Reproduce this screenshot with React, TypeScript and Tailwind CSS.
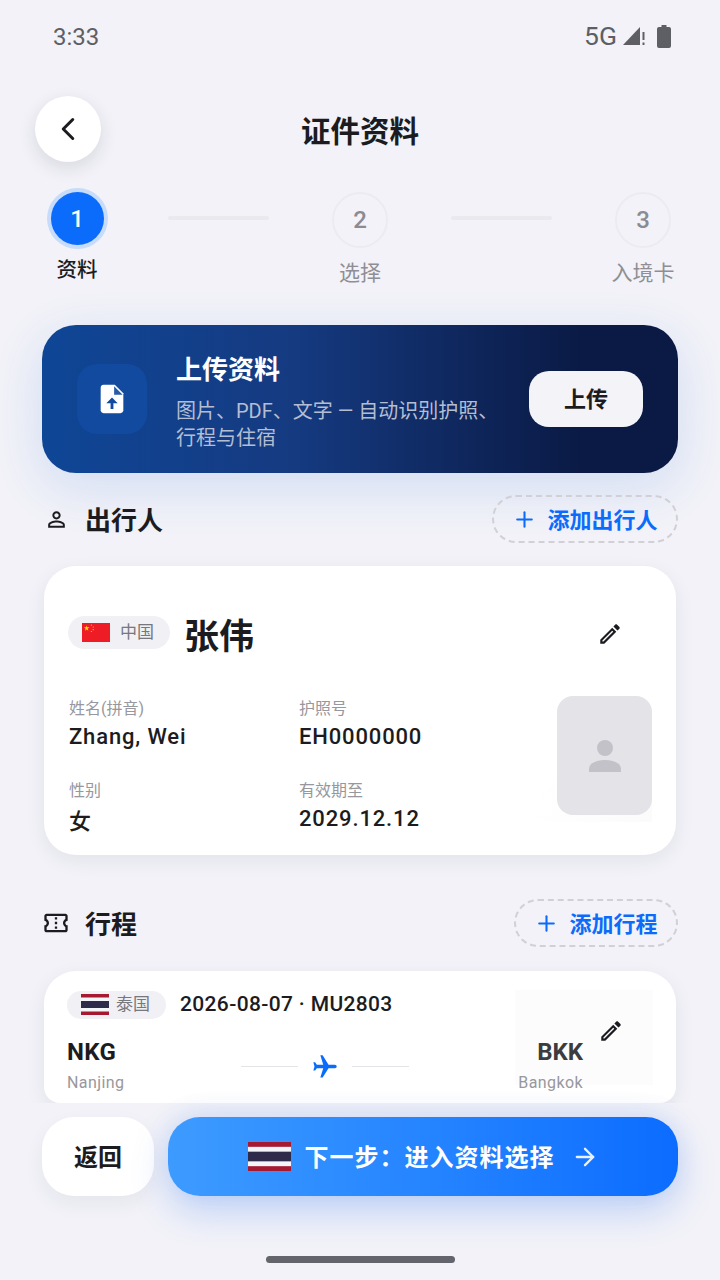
import { ArrowRight, ChevronLeft, Plus } from 'lucide-react';

const EDIT_PATH =
  'M14.06 9.02l.92.92L5.92 19H5v-.92l9.06-9.06M17.66 3c-.25 0-.51.1-.7.29l-1.83 1.83 3.75 3.75 1.83-1.83c.39-.39.39-1.02 0-1.41l-2.34-2.34c-.2-.2-.45-.29-.71-.29zm-3.6 3.19L3 17.25V21h3.75L17.81 9.94l-3.75-3.75z';
const PERSON_PATH =
  'M12 5.9c1.16 0 2.1.94 2.1 2.1s-.94 2.1-2.1 2.1S9.9 9.16 9.9 8s.94-2.1 2.1-2.1m0 9c2.97 0 6.1 1.46 6.1 2.1v1.1H5.9V17c0-.64 3.13-2.1 6.1-2.1M12 4C9.79 4 8 5.79 8 8s1.79 4 4 4 4-1.79 4-4-1.79-4-4-4zm0 9c-2.67 0-8 1.34-8 4v3h16v-3c0-2.66-5.33-4-8-4z';
const TICKET_PATH =
  'M22 10V6c0-1.11-.9-2-2-2H4c-1.1 0-1.99.89-1.99 2v4c1.1 0 1.99.9 1.99 2s-.89 2-2 2v4c0 1.1.9 2 2 2h16c1.1 0 2-.9 2-2v-4c-1.1 0-2-.9-2-2s.9-2 2-2zm-2-1.46c-1.19.69-2 1.99-2 3.46s.81 2.77 2 3.46V18H4v-2.54c1.19-.69 2-1.99 2-3.46 0-1.48-.8-2.77-1.99-3.46L4 6h16v2.54zM11 15h2v2h-2zm0-4h2v2h-2zm0-4h2v2h-2z';

function MaterialIcon({ d, className }: { d: string; className?: string }) {
  return (
    <svg viewBox="0 0 24 24" fill="currentColor" className={className}>
      <path d={d} />
    </svg>
  );
}

function ThaiFlag({ className }: { className?: string }) {
  return (
    <svg viewBox="0 0 30 20" preserveAspectRatio="none" className={className}>
      <rect width="30" height="20" fill="#a51931" />
      <rect y="3.33" width="30" height="13.34" fill="#f4f5f8" />
      <rect y="6.67" width="30" height="6.66" fill="#2d2a4a" />
    </svg>
  );
}

function ChinaFlag() {
  return (
    <svg viewBox="0 0 30 20" preserveAspectRatio="none" className="w-[28px] h-[19px] flex-shrink-0">
      <rect width="30" height="20" fill="#ee1c25" />
      <polygon points="5,2.5 5.7,4.600 8,4.600 6.100,6 6.900,8.200 5,6.800 3.100,8.200 3.900,6 2,4.600 4.300,4.600" fill="#ffde00" />
      <circle cx="10" cy="2.2" r="0.6" fill="#ffde00" />
      <circle cx="12" cy="4.2" r="0.6" fill="#ffde00" />
      <circle cx="12" cy="7" r="0.6" fill="#ffde00" />
      <circle cx="10" cy="9" r="0.6" fill="#ffde00" />
    </svg>
  );
}

function Step({ n, label, active }: { n: number; label: string; active?: boolean }) {
  return (
    <div className="w-[100px] flex flex-col items-center flex-shrink-0">
      {active ? (
        <>
          <div className="w-[53px] h-[53px] mt-[4px] rounded-full bg-[#0b6cfb] ring-4 ring-[#c6dcfa] flex items-center justify-center text-white text-[24px] font-medium leading-none">
            {n}
          </div>
          <div className="mt-[13px] text-[20.5px] leading-[24px] font-medium text-[#1c1c20]">{label}</div>
        </>
      ) : (
        <>
          <div className="w-[56px] h-[56px] mt-[4px] rounded-full border-2 border-[#ebebf0] flex items-center justify-center text-[#8b8b90] text-[24px] font-medium leading-none">
            {n}
          </div>
          <div className="mt-[13px] text-[21px] leading-[24px] text-[#8e8e94]">{label}</div>
        </>
      )}
    </div>
  );
}

function SectionHeader({ iconPath, iconSize, title, action, buttonWidth }: { iconPath: string; iconSize: string; title: string; action: string; buttonWidth: string }) {
  return (
    <div className="flex items-center justify-between pl-[44px] pr-[42px] h-[48px]">
      <div className="flex items-center">
        <div className="w-[24px] flex justify-center">
          <MaterialIcon d={iconPath} className={`${iconSize} text-[#1c1c20] flex-none`} />
        </div>
        <span className="ml-[17px] pt-[4px] text-[26px] leading-none font-bold text-[#1c1c20]">{title}</span>
      </div>
      <div className={`${buttonWidth} h-[48px] rounded-full border-2 border-dashed border-[#d0d0d6] flex items-center justify-center gap-[10px] text-[#0b6cfb] text-[22px] font-semibold`}>
        <Plus className="w-[25px] h-[25px]" strokeWidth={2} />
        <span className="pt-[2px]">{action}</span>
      </div>
    </div>
  );
}

function Field({ label, value, tall }: { label: string; value: string; tall?: boolean }) {
  return (
    <div>
      <div className="text-[16px] leading-[20px] text-[#97979d]">{label}</div>
      <div className={`mt-[5px] text-[22px] leading-[26px] tracking-[0.85px] font-medium text-[#1c1c20] ${tall ? 'pt-[3px]' : ''}`}>{value}</div>
    </div>
  );
}

export default function App() {
  return (
    <div className="w-[720px] h-[1280px] overflow-hidden flex flex-col bg-[#f2f2f8] font-['Roboto','Noto_Sans_CJK_SC',sans-serif]">
      <main className="h-[1103px] flex-shrink-0 overflow-hidden">
        {/* Status bar */}
        <div className="h-[72px] pl-[53px] pr-[49px] flex items-center justify-between text-[#5e5f65]">
          <span className="text-[24px] leading-none pt-[1px]">3:33</span>
          <div className="flex items-center">
            <span className="text-[26.5px] leading-none">5G</span>
            <svg viewBox="0 0 23 22" className="w-[23px] h-[22px] ml-[6px] fill-current">
              <path d="M17 2v18H0z" />
              <path d="M19.500 7h2v8h-2zM19.500 17.500h2V20h-2z" />
            </svg>
            <svg viewBox="0 0 14 24" className="w-[14px] h-[24px] ml-[11px] fill-current">
              <path d="M4.500 1h5v2H12a2 2 0 0 1 2 2v17a2 2 0 0 1-2 2H2a2 2 0 0 1-2-2V5a2 2 0 0 1 2-2h2.500z" />
            </svg>
          </div>
        </div>

        {/* Header */}
        <div className="mt-[24px] px-[35px] flex items-center">
          <div className="w-[66px] h-[66px] rounded-full bg-white shadow-[0_6px_18px_rgba(30,30,50,0.12)] flex items-center justify-center flex-shrink-0">
            <ChevronLeft className="w-[38px] h-[38px] text-[#1c1c20]" strokeWidth={1.9} />
          </div>
          <h1 className="flex-1 text-center text-[29.5px] leading-[36px] mt-[5px] font-bold text-[#1c1c20]">证件资料</h1>
          <div className="w-[66px] flex-shrink-0" />
        </div>

        {/* Stepper */}
        <div className="mt-[26px] px-[27px] flex items-start">
          <Step n={1} label="资料" active />
          <div className="mx-[41px] mt-[28px] h-[4px] w-[101px] flex-shrink-0 rounded-full bg-[#e9e9ee]" />
          <Step n={2} label="选择" />
          <div className="mx-[41px] mt-[28px] h-[4px] w-[101px] flex-shrink-0 rounded-full bg-[#e9e9ee]" />
          <Step n={3} label="入境卡" />
        </div>

        {/* Upload banner */}
        <div className="mt-[40px] mx-[42px] h-[148px] rounded-[34px] bg-gradient-to-r from-[#0e4696] via-[#153a80] via-40% to-[#0a1a45] to-85% shadow-[0_14px_50px_rgba(40,110,220,0.16)] pl-[35px] pr-[35px] flex items-center">
          <div className="w-[70px] h-[70px] rounded-[20px] bg-[#114a9e] flex items-center justify-center flex-shrink-0">
            <svg viewBox="0 0 24 24" className="w-[34px] h-[34px]">
              <path d="M14 2H6c-1.100 0-2 .9-2 2v16c0 1.100.9 2 2 2h12c1.100 0 2-.9 2-2V8z" fill="#fff" />
              <path d="M13.500 3V9h6z" fill="#114a9e" opacity="0.9" />
              <path d="M12 11l-4 4h3v4h2v-4h3z" fill="#114a9e" />
            </svg>
          </div>
          <div className="ml-[29px] pt-[8px] flex-1 min-w-0">
            <div className="text-[26px] leading-[32px] font-semibold text-white">上传资料</div>
            <div className="mt-[12px] w-[325px] text-[20px] leading-[27px] text-[#b3bed2]">图片、PDF、文字 — 自动识别护照、行程与住宿</div>
          </div>
          <div className="w-[114px] h-[56px] rounded-[20px] bg-[#f4f3f7] flex items-center justify-center text-[22px] font-bold text-[#1c1c20] flex-shrink-0">
            上传
          </div>
        </div>

        <div className="mt-[22px]">
          <SectionHeader iconPath={PERSON_PATH} iconSize="w-[25px] h-[25px]" title="出行人" action="添加出行人" buttonWidth="w-[186px]" />
        </div>

        {/* Traveller card */}
        <div className="relative mt-[23px] mx-[44px] h-[289px] rounded-[32px] bg-white shadow-[0_6px_20px_rgba(30,30,60,0.07)] pl-[25px] pr-[24px] pt-[50px]">
          <div className="flex items-center">
            <div className="h-[33px] w-[102px] -ml-[1px] rounded-full bg-[#f1f1f5] pl-[14px] flex items-center -mt-[11px]">
              <ChinaFlag />
              <span className="ml-[10px] text-[17px] text-[#77777e]">中国</span>
            </div>
            <span className="ml-[14px] text-[35px] leading-[44px] font-bold text-[#1c1c20]">张伟</span>
            <MaterialIcon d={EDIT_PATH} className="w-[26px] h-[26px] text-[#1c1c20] ml-auto mr-[29px] -mt-[9px]" />
          </div>
          <div className="flex mt-[39px]">
            <div className="w-[230px] flex flex-col gap-[31px]">
              <Field label="姓名(拼音)" value="Zhang, Wei" />
              <Field label="性别" value="女" tall />
            </div>
            <div className="flex flex-col gap-[31px]">
              <Field label="护照号" value="EH0000000" />
              <Field label="有效期至" value="2029.12.12" />
            </div>
          </div>
          {/* Photo placeholder */}
          <div className="absolute right-[24px] top-[214px] w-[122px] h-[42px] rounded-tl-[60px] bg-gradient-to-r from-white to-[#fbfbfc]" />
          <div className="absolute right-[24px] top-[130px] w-[95px] h-[119px] rounded-[16px] bg-[#e3e3e8] flex items-center justify-center">
            <svg viewBox="0 0 24 24" className="w-[48px] h-[48px] text-[#c2c2c8]" fill="currentColor">
              <circle cx="12" cy="8" r="4" />
              <path d="M4 20v-1.500C4 15.500 8 14 12 14s8 1.500 8 4.500V20z" />
            </svg>
          </div>
        </div>

        <div className="mt-[44px]">
          <SectionHeader iconPath={TICKET_PATH} iconSize="w-[28px] h-[28px]" title="行程" action="添加行程" buttonWidth="w-[164px]" />
        </div>

        {/* Trip card */}
        <div className="relative mt-[24px] mx-[44px] h-[132px] rounded-t-[32px] rounded-b-[16px] bg-white shadow-[0_6px_20px_rgba(30,30,60,0.07)] pl-[23px] pr-[24px] pt-[18px]">
          <div className="absolute left-[471px] top-[19px] w-[138px] h-[95px] bg-[#fcfcfd]" />
          <div className="relative flex items-center">
            <div className="h-[28px] w-[99px] rounded-full bg-[#f1f1f5] pl-[14px] flex items-center">
              <ThaiFlag className="w-[28px] h-[21px] flex-shrink-0" />
              <span className="ml-[7px] text-[17px] text-[#77777e]">泰国</span>
            </div>
            <span className="ml-[14px] text-[21px] font-medium tracking-[0.35px] text-[#1c1c20]">2026-08-07 · MU2803</span>
          </div>
          <div className="relative flex mt-[16px]">
            <div className="w-[174px]">
              <div className="text-[24px] leading-[30px] font-bold tracking-[0.3px] text-[#1c1c20]">NKG</div>
              <div className="mt-[6px] text-[16px] leading-[20px] tracking-[0.4px] text-[#97979d]">Nanjing</div>
            </div>
            <div className="w-[168px] h-[30px] mt-[15px] flex items-center">
              <div className="w-[57px] h-[1px] bg-[#e3e3e8]" />
              <svg viewBox="0 0 24 24" className="w-[28px] h-[28px] mx-[13px] rotate-90 text-[#0b6cfb] flex-shrink-0" fill="currentColor">
                <path d="M21 16v-2l-8-5V3.500c0-.83-.67-1.500-1.500-1.500S10 2.670 10 3.500V9l-8 5v2l8-2.500V19l-2 1.500V22l3.500-1 3.500 1v-1.500L13 19v-5.500l8 2.500z" />
              </svg>
              <div className="w-[57px] h-[1px] bg-[#e3e3e8]" />
            </div>
            <div className="ml-auto mr-[69px] text-right">
              <div className="text-[24px] leading-[30px] font-bold text-[#3c3c40]">BKK</div>
              <div className="mt-[6px] text-[16px] leading-[20px] tracking-[0.4px] text-[#97979d]">Bangkok</div>
            </div>
          </div>
          <MaterialIcon d={EDIT_PATH} className="absolute left-[554px] top-[47px] w-[26px] h-[26px] text-[#1c1c20]" />
        </div>
      </main>

      {/* Footer actions */}
      <footer className="relative flex-1 pt-[14px] flex flex-col">
        <div className="px-[42px] flex gap-[14px]">
          <div className="w-[112px] h-[79px] rounded-[32px] bg-white shadow-[0_8px_20px_rgba(30,30,60,0.06)] flex items-center justify-center text-[24px] font-bold text-[#1c1c20] flex-shrink-0">
            <span className="pt-[2px]">返回</span>
          </div>
          <div className="flex-1 h-[79px] rounded-[32px] bg-gradient-to-r from-[#3d9bff] to-[#0b6cff] shadow-[0_14px_36px_rgba(30,110,245,0.26),0_-6px_24px_rgba(30,90,200,0.08)] flex items-center justify-center text-white">
            <ThaiFlag className="w-[43px] h-[29px] flex-shrink-0" />
            <span className="ml-[14px] pt-[2px] text-[24px] font-semibold tracking-[1px]">下一步：进入资料选择</span>
            <ArrowRight className="ml-[16px] w-[28px] h-[28px] opacity-90" strokeWidth={2} />
          </div>
        </div>
        <div className="mt-[60px] mx-auto w-[189px] h-[7px] rounded-full bg-[#63646c]" />
      </footer>
    </div>
  );
}
